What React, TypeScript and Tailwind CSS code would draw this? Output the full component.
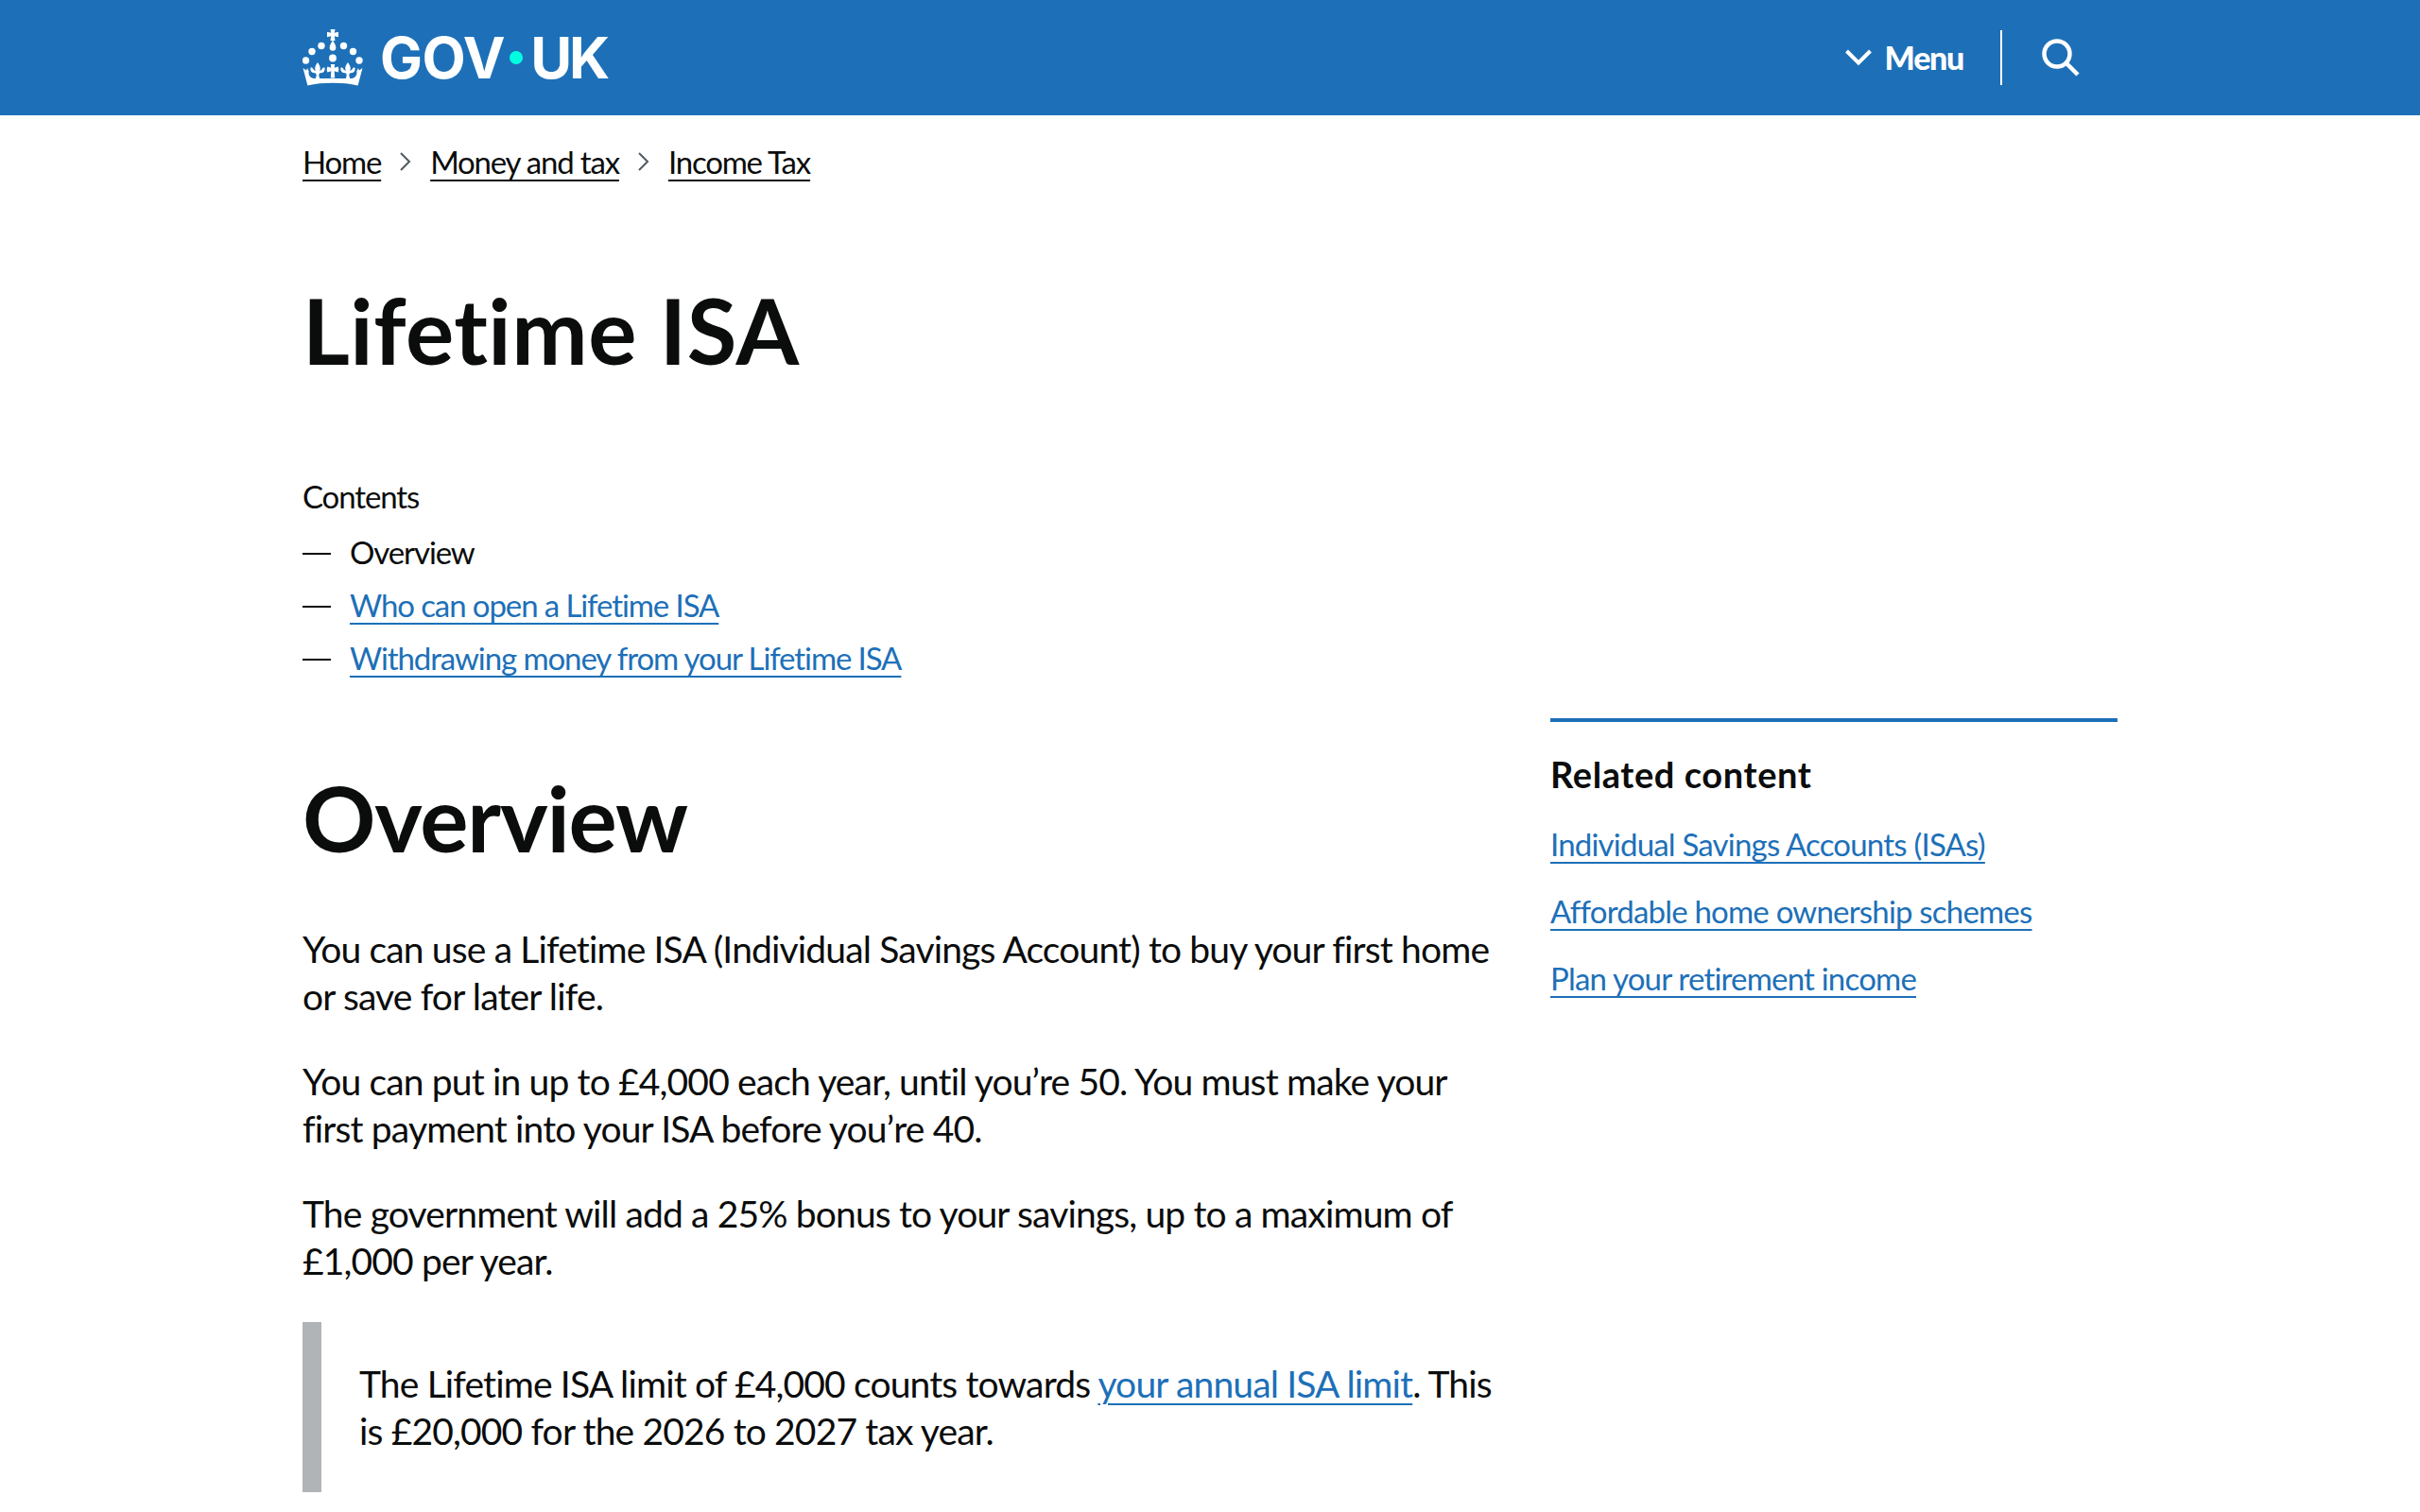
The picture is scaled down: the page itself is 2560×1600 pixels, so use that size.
const Fleur = ({ x }: { x: number }) => (
    <path d={`M${x} 35c1.800 2.600 2.800 4.600 2.800 6.500 0 1-.3 1.800-.8 2.500l2.400-1.200c.4-1.400 1.400-2.300 2.800-2.500.9 1.700.4 4.200-1.600 5.500l-3.600.6-.8 2.200 1 3.400h-4.400l1-3.400-.8-2.200-3.600-.6c-2-1.300-2.500-3.800-1.600-5.500 1.400.2 2.400 1.100 2.800 2.500l2.400 1.200c-.5-.7-.8-1.500-.8-2.500 0-1.900 1-3.900 2.800-6.500z`} />
);

const Crown = () => (
    <svg viewBox="0 0 64 60" className="w-[64px] h-[60px]" fill="white">
        <path d="M29.500 0h5l-.7 3.700 4.200-.9v5.400l-4.200-.9.7 4.700h-5l.7-4.700-4.200.9V2.800l4.200.9z" />
        <path d="M32 11.500c2.200 3.600 3.300 5.800 3.300 8a3.300 3.300 0 0 1-6.600 0c0-2.200 1.100-4.400 3.300-8z" />
        <circle cx="20" cy="17.500" r="3.700" />
        <circle cx="43.500" cy="17.500" r="3.700" />
        <circle cx="10" cy="23.500" r="3.700" />
        <circle cx="53.500" cy="23.500" r="3.700" />
        <circle cx="3.500" cy="33" r="3.700" />
        <circle cx="60" cy="33" r="3.700" />
        <circle cx="32" cy="30.500" r="3.900" />
        <Fleur x={16} />
        <Fleur x={48} />
        <path d="M29.800 37h4.400l-.5 3.800 3.800-1.300c1.100 1.700 1.100 4.300 0 6l-3.800-1.300.5 7.300h-4.400l.5-7.300-3.800 1.300c-1.100-1.700-1.100-4.300 0-6l3.800 1.300z" />
        <path d="M.5 41l3.600 2.500 1-2.500 1.600 3.400c-.5 2 0 4.200 1.600 5.800 1.700 1.700 4 1.900 6.700 1.800h34c2.700.1 5-.1 6.700-1.800 1.600-1.600 2.100-3.800 1.600-5.800L58.900 41l1 2.500 3.600-2.500-4.900 18.500C50 57.500 41.500 56.800 32 56.800s-18 .7-26.600 2.700z" />
    </svg>
);

const Chevron = () => (
    <svg viewBox="0 0 14 24" className="w-[14px] h-[24px] mx-[19px] shrink-0" fill="none" stroke="#505a5f" strokeWidth="2">
        <path d="M2 3l9 9-9 9" />
    </svg>
);

const Dash = () => <span className="w-[30px] h-[2px] mt-[3px] bg-[#0b0c0c] mr-[20px] shrink-0" />;

const link = 'underline decoration-[2px] underline-offset-[6px] text-[#1d70b8]';
const crumb = 'underline decoration-[2px] underline-offset-[6px]';

export default function App() {
    return (
        <div className="h-[1600px] overflow-hidden bg-white text-[#0b0c0c] font-['Lato',sans-serif]">
            <header className="h-[122px] bg-[#1d70b8]">
                <div className="w-[1920px] h-full mx-auto flex items-center">
                    <Crown />
                    <div className="ml-[18px] flex items-center text-white font-['Inter',sans-serif] font-bold text-[60px] leading-none">
                        <span className="tracking-[-0.5px]">GOV</span>
                        <span className="w-[14px] h-[14px] rounded-full bg-[#00ffe0] ml-[5px] mr-[8px]" />
                        <span className="tracking-[-3px]">UK</span>
                    </div>
                    <nav className="ml-auto flex items-center text-white">
                        <svg viewBox="0 0 28 18" className="w-[28px] h-[18px]" fill="none" stroke="white" strokeWidth="4">
                            <path d="M1.500 2l12.500 12.500L26.500 2" />
                        </svg>
                        <span className="ml-[14px] text-[34px] font-black tracking-[-1.300px] leading-none">Menu</span>
                        <span className="ml-[39px] w-[2px] h-[58px] bg-white" />
                        <svg viewBox="0 0 40 40" className="ml-[42px] mr-[40px] w-[40px] h-[40px]" fill="none" stroke="white" strokeWidth="4.500">
                            <circle cx="16" cy="16" r="13.500" />
                            <path d="M25.500 25.500L38 38" />
                        </svg>
                    </nav>
                </div>
            </header>

            <main className="w-[1920px] mx-auto">
                <nav className="pt-[26px] flex items-center text-[33px] tracking-[-1.200px] leading-[46px]">
                    <a className={crumb}>Home</a>
                    <Chevron />
                    <a className={crumb}>Money and tax</a>
                    <Chevron />
                    <a className={crumb}>Income Tax</a>
                </nav>

                <h1 className="mt-[105px] text-[96px] font-bold tracking-[0.5px] leading-[100px]">Lifetime ISA</h1>

                <div className="flex gap-[60px]">
                    <div className="w-[1260px] shrink-0">
                        <div className="mt-[106px] text-[33px] tracking-[-1.100px] leading-[40px]">
                            <p>Contents</p>
                            <ul className="mt-[19px] flex flex-col gap-[16px]">
                                <li className="flex items-center"><Dash />Overview</li>
                                <li className="flex items-center"><Dash /><a className={link}>Who can open a Lifetime ISA</a></li>
                                <li className="flex items-center"><Dash /><a className={link}>Withdrawing money from your Lifetime ISA</a></li>
                            </ul>
                        </div>

                        <h2 className="mt-[99px] text-[96px] font-bold tracking-[-1.200px] leading-[100px]">Overview</h2>

                        <div className="mt-[64px] text-[39px] tracking-[-0.850px] leading-[50px] flex flex-col gap-[40px]">
                            <p>You can use a Lifetime ISA (Individual Savings Account) to buy your first home or save for later life.</p>
                            <p>You can put in up to £4,000 each year, until you’re 50. You must make your first payment into your ISA before you’re 40.</p>
                            <p>The government will add a 25% bonus to your savings, up to a maximum of £1,000 per year.</p>
                            <div className="border-l-[20px] border-[#b1b4b6] pl-[40px] py-[40px] -mr-[10px]">
                                The Lifetime ISA limit of £4,000 counts towards <a className={link}>your annual ISA limit</a>. This is £20,000 for the 2026 to 2027 tax year.
                            </div>
                        </div>
                    </div>

                    <aside className="w-[600px] mt-[361px] self-start">
                        <div className="border-t-[4px] border-[#1d70b8] pt-[30px]">
                            <h2 className="text-[38px] font-bold tracking-[0.6px] leading-[50px]">Related content</h2>
                            <ul className="mt-[29px] flex flex-col gap-[30px] text-[33px] tracking-[-0.800px] leading-[41px]">
                                <li><a className={link}>Individual Savings Accounts (ISAs)</a></li>
                                <li><a className={link}>Affordable home ownership schemes</a></li>
                                <li><a className={link}>Plan your retirement income</a></li>
                            </ul>
                        </div>
                    </aside>
                </div>
            </main>
        </div>
    );
}
